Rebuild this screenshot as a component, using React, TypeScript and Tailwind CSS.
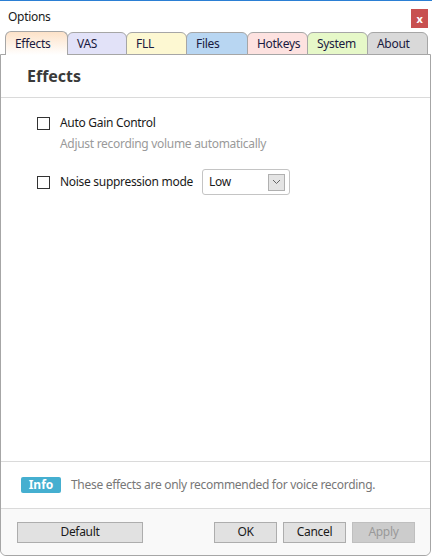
import React from "react";

const tabs = [
  { label: "Effects", cls: "w-[63px] bg-gradient-to-b from-[#fde2c8] to-white border-b-0 h-[24px] z-10" },
  { label: "VAS", cls: "w-[60px] bg-[#e2e2f8]" },
  { label: "FLL", cls: "w-[61px] bg-[#fdf8d2]" },
  { label: "Files", cls: "w-[62px] bg-[#b8d6f2]" },
  { label: "Hotkeys", cls: "w-[61px] bg-[#fde2e0]" },
  { label: "System", cls: "w-[61px] bg-[#e6f8c8]" },
  { label: "About", cls: "w-[61px] bg-[#d9d9d9]" },
];

function Checkbox() {
  return <span className="w-[13px] h-[13px] border border-[#333] bg-white shrink-0" />;
}

export default function App() {
  return (
    <div
      className="w-[432px] h-[556px] bg-white border-t border-[#2b7fd4] flex flex-col text-[12px] tracking-[-0.3px] text-[#1a1a1a]"
      style={{ fontFamily: "'Noto Sans', 'Open Sans', sans-serif" }}
    >
      {/* title bar */}
      <div className="h-[31px] flex items-center justify-between pl-[8px] pr-[3px] shrink-0">
        <span>Options</span>
        <button className="w-[17px] h-[19px] bg-[#c85050] text-white text-[11px] font-bold leading-none flex items-center justify-center mt-[3px] mr-px">
          x
        </button>
      </div>

      {/* tabs */}
      <div className="flex items-end h-[23px] pl-[5px] shrink-0">
        {tabs.map((t, i) => (
          <div
            key={t.label}
            className={`relative h-[23px] border border-[#a6a6a6] rounded-t-[6px] flex items-center pl-[9px] text-[#1a1a40] ${i > 0 ? "-ml-px" : ""} ${t.cls}`}
          >
            {t.label}
          </div>
        ))}
      </div>

      {/* panel */}
      <div className="flex-1 flex flex-col border border-[#a6a6a6] rounded-b-[6px] mr-px -mt-px min-h-0">
        <div className="h-[43px] flex items-center pl-[26px] border-b border-[#dadada] shrink-0">
          <span className="text-[16px] font-bold tracking-normal text-[#3a3a3a]">Effects</span>
        </div>

        <div className="flex-1 pl-[36px] pt-[18px]">
          <div className="flex items-center gap-[10px] h-[14px]">
            <Checkbox />
            <span>Auto Gain Control</span>
          </div>
          <div className="pl-[23px] mt-[5px] text-[#9a9a9a]">Adjust recording volume automatically</div>
          <div className="flex items-center mt-[16px]">
            <Checkbox />
            <span className="ml-[10px]">Noise suppression mode</span>
            <div className="ml-[9px] w-[88px] h-[26px] border border-[#c4c4c4] rounded-[3px] flex items-center justify-between pl-[6px] pr-[4px]">
              <span>Low</span>
              <span className="w-[17px] h-[17px] bg-[#e4e4e4] border border-[#b0b0b0] flex items-center justify-center">
                <svg width="9" height="6" viewBox="0 0 9 6" fill="none">
                  <path d="M1 1l3.5 3.5L8 1" stroke="#666" strokeWidth="1" />
                </svg>
              </span>
            </div>
          </div>
        </div>

        <div className="h-[47px] border-t border-[#dadada] flex items-center pl-[20px] gap-[10px] shrink-0">
          <span className="w-[40px] h-[16px] rounded-[2px] bg-[#45afd0] text-white font-bold tracking-normal flex items-center justify-center">
            Info
          </span>
          <span className="text-[#777]">These effects are only recommended for voice recording.</span>
        </div>

        <div className="h-[47px] border-t border-[#dadada] bg-[#f9f9f9] rounded-b-[6px] flex items-center pl-[16px] pr-[15px] shrink-0">
          <button className="w-[126px] h-[21px] bg-[#e1e1e1] border border-[#adadad]">Default</button>
          <div className="ml-auto flex gap-[6px]">
            <button className="w-[63px] h-[21px] bg-[#e1e1e1] border border-[#adadad]">OK</button>
            <button className="w-[63px] h-[21px] bg-[#e1e1e1] border border-[#adadad]">Cancel</button>
            <button className="w-[63px] h-[21px] bg-[#cccccc] border border-[#bfbfbf] text-[#999]">Apply</button>
          </div>
        </div>
      </div>
    </div>
  );
}
